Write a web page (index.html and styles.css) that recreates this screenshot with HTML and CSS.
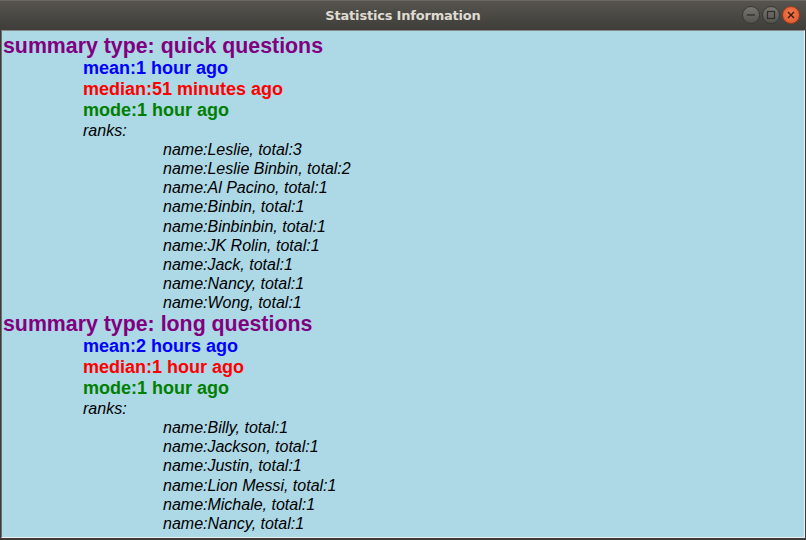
FILE: index.html
```html
<!DOCTYPE html>
<html>
<head>
<meta charset="utf-8">
<link rel="stylesheet" href="styles.css">
</head>
<body>
<div class="window">
  <div class="titlebar">
    <div class="title">Statistics Information</div>
    <div class="controls">
      <span class="btn gray"><svg width="18" height="18" viewBox="0 0 18 18"><line x1="5" y1="9" x2="13" y2="9" stroke="#2e2d2a" stroke-width="1.3"/></svg></span>
      <span class="btn gray"><svg width="18" height="18" viewBox="0 0 18 18"><rect x="5.5" y="5.5" width="7" height="7" fill="none" stroke="#2e2d2a" stroke-width="1.2"/></svg></span>
      <span class="btn close"><svg width="18" height="18" viewBox="0 0 18 18"><path d="M6 6 L12 12 M12 6 L6 12" stroke="#3a1a10" stroke-width="1.4"/></svg></span>
    </div>
  </div>
  <div class="content">
    <div class="summary">summary type: quick questions</div>
    <div class="lvl1 mean">mean:1 hour ago</div>
    <div class="lvl1 median">median:51 minutes ago</div>
    <div class="lvl1 mode">mode:1 hour ago</div>
    <div class="lvl1 ranks">ranks:</div>
    <div class="lvl2 name">name:Leslie, total:3</div>
    <div class="lvl2 name">name:Leslie Binbin, total:2</div>
    <div class="lvl2 name">name:Al Pacino, total:1</div>
    <div class="lvl2 name">name:Binbin, total:1</div>
    <div class="lvl2 name">name:Binbinbin, total:1</div>
    <div class="lvl2 name">name:JK Rolin, total:1</div>
    <div class="lvl2 name">name:Jack, total:1</div>
    <div class="lvl2 name">name:Nancy, total:1</div>
    <div class="lvl2 name">name:Wong, total:1</div>
    <div class="summary">summary type: long questions</div>
    <div class="lvl1 mean">mean:2 hours ago</div>
    <div class="lvl1 median">median:1 hour ago</div>
    <div class="lvl1 mode">mode:1 hour ago</div>
    <div class="lvl1 ranks">ranks:</div>
    <div class="lvl2 name">name:Billy, total:1</div>
    <div class="lvl2 name">name:Jackson, total:1</div>
    <div class="lvl2 name">name:Justin, total:1</div>
    <div class="lvl2 name">name:Lion Messi, total:1</div>
    <div class="lvl2 name">name:Michale, total:1</div>
    <div class="lvl2 name">name:Nancy, total:1</div>
  </div>
</div>
</body>
</html>
```
FILE: styles.css
```css
html, body { margin: 0; padding: 0; }
body { width: 806px; height: 540px; overflow: hidden; background: #3c3b37; font-family: "Liberation Sans", Arial, sans-serif; }
.window { display: flex; flex-direction: column; height: 540px; }
.titlebar {
  height: 30px; flex: none; position: relative;
  background: linear-gradient(#56544e, #3e3d39);
  border-top: 1px solid #6a685f; box-sizing: border-box;
  display: flex; align-items: center; justify-content: center;
}
.title { font-family: "DejaVu Sans", sans-serif; font-weight: bold; font-size: 13px; color: #dfdbd2; letter-spacing: -0.2px; }
.controls { position: absolute; right: 6px; top: 5px; display: flex; gap: 2px; }
.btn { width: 18px; height: 18px; border-radius: 50%; display: block; box-sizing: border-box; }
.btn svg { display: block; }
.btn.gray { background: linear-gradient(#77756f, #55534e); border: 1px solid #3a3935; }
.btn.gray svg { margin: -1px; }
.btn.close { background: radial-gradient(circle at 50% 40%, #f27a4e, #e0552a); border: 1px solid #9c3a1c; }
.btn.close svg { margin: -1px; }
.content {
  flex: 1; background: #add8e6; margin: 0 1px 2px 1px;
  border-top: 1px solid #8a8a8a; border-left: 1px solid #6e6e6e; border-right: 1px solid #e8eef0; border-bottom: 1px solid #f0f0f0;
  padding: 3px 0 0 1px; box-sizing: border-box;
}
.summary { color: #800080; font-weight: bold; font-size: 21.33px; line-height: 24px; }
.lvl1 { padding-left: 80px; }
.lvl2 { padding-left: 160px; }
.mean, .median, .mode { font-weight: bold; font-size: 18px; line-height: 21px; }
.mean { color: #0000ff; }
.median { color: #ff0000; }
.mode { color: #008000; }
.ranks, .name { font-style: italic; font-size: 16px; line-height: 19px; color: #000; }
.name { line-height: 19.125px; }
```
